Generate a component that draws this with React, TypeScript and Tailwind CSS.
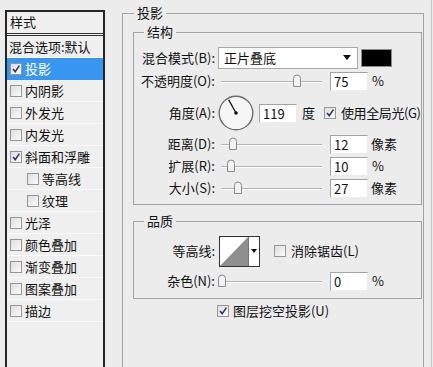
import React from 'react';

const styles = [
  { label: '投影', checked: true, selected: true },
  { label: '内阴影' },
  { label: '外发光' },
  { label: '内发光' },
  { label: '斜面和浮雕', checked: true },
  { label: '等高线', indent: true },
  { label: '纹理', indent: true },
  { label: '光泽' },
  { label: '颜色叠加' },
  { label: '渐变叠加' },
  { label: '图案叠加' },
  { label: '描边' },
];

function Check({ checked }: { checked?: boolean }) {
  return (
    <span className="inline-flex w-[12px] h-[12px] shrink-0 border border-[#969696] bg-gradient-to-br from-[#dedede] to-[#fbfbfb]">
      {checked && (
        <svg width="10" height="10" viewBox="0 0 10 10">
          <path d="M2 5 L4.2 7.6 L8.4 1.6" stroke="#2b3a5e" strokeWidth="1.6" fill="none" />
        </svg>
      )}
    </span>
  );
}

function NumBox({ value }: { value: string }) {
  return (
    <div className="w-[38px] h-[19px] bg-white border border-t-[#a3a3a3] border-l-[#a3a3a3] border-b-[#ececec] border-r-[#ececec] pl-[3px] text-[13px] leading-[17px]">
      {value}
    </div>
  );
}

function Slider({ at }: { at: number }) {
  // at = thumb centre, px from slider start
  return (
    <div className="relative w-[104px] h-[16px] ml-[3px]">
      <div className="absolute left-[3px] right-0 top-[8px] h-[1px] bg-[#b4b4b4]" />
      <div className="absolute left-[3px] right-0 top-[9px] h-[1px] bg-white" />
      <svg className="absolute top-[1px]" style={{ left: at - 5 }} width="10" height="14" viewBox="0 0 10 14">
        <path d="M1.5 4.5 Q1.5 1 5 1 Q8.5 1 8.5 4.5 L8.5 12.5 L1.5 12.5 Z" fill="#f2f2f2" stroke="#8a8a8a" />
      </svg>
    </div>
  );
}

function Label({ children }: { children: React.ReactNode }) {
  return <div className="w-[81px] shrink-0 text-right whitespace-nowrap">{children}</div>;
}

export default function App() {
  return (
    <div className="w-[433px] h-[367px] overflow-hidden bg-[#ececec] flex text-[13px] text-[#111] font-['Noto_Sans_CJK_SC',sans-serif]">
      {/* styles list */}
      <div className="ml-[5px] mt-[10px] w-[100px] h-[370px] shrink-0 border-2 border-[#262626] bg-[#efefef]">
        <div className="h-[24px] pl-[3px] leading-[20px] border-b-[3px] border-double border-[#333]">样式</div>
        <div className="h-[22px] pl-[2px] flex items-center border-b border-[#fafafa] whitespace-nowrap">混合选项:默认</div>
        {styles.map(s => (
          <div
            key={s.label}
            className={
              s.selected
                ? 'h-[22px] flex items-center gap-[3px] pl-[3px] bg-[#3996f0] text-white'
                : s.indent
                ? 'h-[22px] flex items-center gap-[3px] pl-[20px] border-b border-[#fafafa]'
                : 'h-[22px] flex items-center gap-[3px] pl-[3px] border-b border-[#fafafa]'
            }
          >
            <Check checked={s.checked} />
            <span>{s.label}</span>
          </div>
        ))}
      </div>

      {/* settings */}
      <div className="ml-[17px] pt-[5px] shrink-0">
        <fieldset className="w-[302px] h-[400px] border border-[#a2a2a2]">
          <legend className="ml-[11px] px-[3px] leading-[16px]">投影</legend>

          <fieldset className="ml-[10px] mt-[3px] w-[289px] border border-[#a2a2a2] pb-[5px]">
            <legend className="ml-[10px] px-[3px] leading-[16px]">结构</legend>

            <div className="mt-[6px] h-[23px] flex items-center">
              <Label>混合模式(B):</Label>
              <div className="ml-[3px] w-[140px] h-[22px] bg-white border border-[#a8a8a8] flex items-center justify-between pl-[5px] pr-[6px]">
                <span>正片叠底</span>
                <svg width="8" height="5" viewBox="0 0 8 5">
                  <path d="M0 0 L8 0 L4 5 Z" fill="#111" />
                </svg>
              </div>
              <div className="ml-[3px] w-[31px] h-[18px] bg-black border border-[#8a8a8a]" />
            </div>

            <div className="h-[24px] flex items-center">
              <Label>不透明度(O):</Label>
              <Slider at={79} />
              <div className="ml-[8px]"><NumBox value="75" /></div>
              <span className="ml-[4px]">%</span>
            </div>

            <div className="h-[40px] flex items-center whitespace-nowrap">
              <Label>角度(A):</Label>
              <svg className="ml-[3px] shrink-0" width="36" height="36" viewBox="0 0 36 36">
                <circle cx="18" cy="18" r="16.8" fill="#f6f6f6" stroke="#6b6b6b" strokeWidth="1.4" />
                <path d="M18 18 L10.7 4.9" stroke="#111" strokeWidth="1.3" />
                <circle cx="18" cy="18" r="1.8" fill="#111" />
              </svg>
              <div className="ml-[5px]"><NumBox value="119" /></div>
              <span className="ml-[5px]">度</span>
              <span className="ml-[9px] flex"><Check checked /></span>
              <span className="ml-[5px] tracking-[-0.4px]">使用全局光(G)</span>
            </div>

            <div className="h-[22px] flex items-center">
              <Label>距离(D):</Label>
              <Slider at={15} />
              <div className="ml-[8px]"><NumBox value="12" /></div>
              <span className="ml-[3px]">像素</span>
            </div>

            <div className="h-[22px] flex items-center">
              <Label>扩展(R):</Label>
              <Slider at={13} />
              <div className="ml-[8px]"><NumBox value="10" /></div>
              <span className="ml-[4px]">%</span>
            </div>

            <div className="h-[22px] flex items-center">
              <Label>大小(S):</Label>
              <Slider at={20} />
              <div className="ml-[8px]"><NumBox value="27" /></div>
              <span className="ml-[3px]">像素</span>
            </div>
          </fieldset>

          <fieldset className="ml-[10px] mt-[8px] w-[289px] border border-[#a2a2a2] pb-[7px]">
            <legend className="ml-[10px] px-[3px] leading-[16px]">品质</legend>

            <div className="mt-[7px] h-[30px] flex items-center">
              <Label>等高线:</Label>
              <div className="ml-[4px] w-[41px] h-[31px] flex border border-[#333] bg-white">
                <svg width="28" height="29" viewBox="0 0 28 29">
                  <path d="M0 29 L28 0 L28 29 Z" fill="#8f8f8f" />
                </svg>
                <div className="flex-1 border-l border-[#777] flex items-center justify-center">
                  <svg width="6" height="4" viewBox="0 0 6 4">
                    <path d="M0 0 L6 0 L3 4 Z" fill="#111" />
                  </svg>
                </div>
              </div>
              <span className="ml-[14px] flex"><Check /></span>
              <span className="ml-[5px] whitespace-nowrap">消除锯齿(L)</span>
            </div>

            <div className="mt-[5px] h-[20px] flex items-center">
              <Label>杂色(N):</Label>
              <Slider at={4} />
              <div className="ml-[8px]"><NumBox value="0" /></div>
              <span className="ml-[4px]">%</span>
            </div>
          </fieldset>

          <div className="mt-[3px] h-[18px] flex items-center justify-center gap-[4px]">
            <Check checked />
            <span>图层挖空投影(U)</span>
          </div>
        </fieldset>
      </div>

      <div className="ml-[7px] w-[1px] h-full bg-[#c4c4c4]" />
    </div>
  );
}
